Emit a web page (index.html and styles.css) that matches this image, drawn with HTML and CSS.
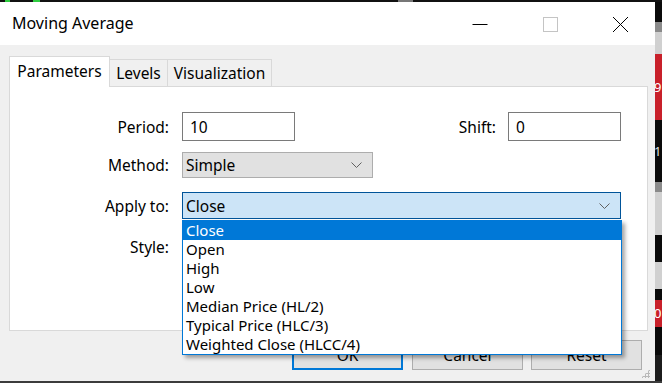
FILE: index.html
```html
<!DOCTYPE html>
<html lang="en">
<head>
    <meta charset="UTF-8">
    <title>Moving Average</title>
    <link rel="stylesheet" href="styles.css">
</head>
<body>
    <div class="screen">
        <div class="top-strip"></div>
        <div class="middle">
            <div class="window">
                <div class="titlebar">
                    <span class="title">Moving Average</span>
                    <div class="controls">
                        <div class="ctl">
                            <svg width="16" height="16" viewBox="0 0 16 16"><path d="M0.5 8.5h15" stroke="#000" stroke-width="1"/></svg>
                        </div>
                        <div class="ctl">
                            <svg width="16" height="16" viewBox="0 0 16 16"><rect x="1.5" y="1.5" width="14" height="14" fill="none" stroke="#c4c4c4" stroke-width="1"/></svg>
                        </div>
                        <div class="ctl">
                            <svg width="16" height="16" viewBox="0 0 16 16"><path d="M1 1L16 16M16 1L1 16" stroke="#000" stroke-width="1"/></svg>
                        </div>
                    </div>
                </div>

                <div class="content">
                    <div class="tabs">
                        <div class="tab active tab-params">Parameters</div>
                        <div class="tab tab-levels">Levels</div>
                        <div class="tab tab-vis">Visualization</div>
                    </div>

                    <div class="panel">
                        <div class="form">
                            <label class="lbl">Period:</label>
                            <div class="row-pair">
                                <div class="edit short">10</div>
                                <label class="lbl shift-lbl">Shift:</label>
                                <div class="edit short">0</div>
                            </div>

                            <label class="lbl">Method:</label>
                            <div class="combo method">
                                <span>Simple</span>
                                <svg class="chev" width="11" height="6" viewBox="0 0 11 6"><path d="M0.5 0.5L5.5 5.5L10.5 0.5" fill="none" stroke="#606060" stroke-width="1"/></svg>
                            </div>

                            <label class="lbl apply-lbl">Apply to:</label>
                            <div class="combo apply">
                                <span>Close</span>
                                <svg class="chev" width="11" height="6" viewBox="0 0 11 6"><path d="M0.5 0.5L5.5 5.5L10.5 0.5" fill="none" stroke="#606060" stroke-width="1"/></svg>
                            </div>

                            <label class="lbl style-lbl">Style:</label>
                            <div></div>
                        </div>
                    </div>

                    <div class="buttons">
                        <button class="btn default">OK</button>
                        <button class="btn">Cancel</button>
                        <button class="btn">Reset</button>
                    </div>

                    <ul class="droplist">
                        <li class="selected">Close</li>
                        <li>Open</li>
                        <li>High</li>
                        <li>Low</li>
                        <li>Median Price (HL/2)</li>
                        <li>Typical Price (HLC/3)</li>
                        <li>Weighted Close (HLCC/4)</li>
                    </ul>

                    <div class="grip"></div>
                </div>
            </div>

            <div class="chart-edge">
                <div class="seg s-black" style="height:20px"></div>
                <div class="seg s-grey" style="height:10px"></div>
                <div class="seg s-light" style="height:22px"></div>
                <div class="seg s-red" style="height:66px"><span>9</span></div>
                <div class="seg s-black" style="height:62px"><span class="num">1</span></div>
                <div class="seg s-grey" style="height:10px"></div>
                <div class="seg s-light" style="height:43px"></div>
                <div class="seg s-black" style="height:27px"></div>
                <div class="seg s-light" style="height:27px"></div>
                <div class="seg s-black" style="height:11px"></div>
                <div class="seg s-red" style="height:27px"><span>0</span></div>
                <div class="seg s-black" style="height:28px"></div>
                <div class="seg s-dark" style="height:28px"></div>
            </div>
        </div>
        <div class="bottom-strip"></div>
    </div>
</body>
</html>
```

FILE: styles.css
```css
html, body {
    margin: 0;
    padding: 0;
    background-color: #000;
}
body {
    font-family: "Noto Sans", "Open Sans", sans-serif;
    font-size: 15.5px;
    color: #000;
}
.screen {
    width: 662px;
    height: 383px;
    display: flex;
    flex-direction: column;
    overflow: hidden;
}
.top-strip {
    height: 2px;
    background: linear-gradient(to right, #111 0, #111 5px, #2ecc40 5px, #2ecc40 10px, #111 10px, #111 33px, #2ecc40 33px, #2ecc40 40px, #111 40px, #111 398px, #777 398px, #777 413px, #111 413px);
}
.middle {
    display: flex;
    height: 379px;
}
.bottom-strip {
    height: 2px;
    background-color: #3c3c3c;
}

/* dialog window */
.window {
    width: 655px;
    height: 379px;
    display: flex;
    flex-direction: column;
    background-color: #f0f0f0;
}
.titlebar {
    height: 43px;
    background-color: #fff;
    display: flex;
    align-items: center;
    justify-content: space-between;
}
.title {
    padding-left: 12px;
    font-size: 16px;
    margin-top: -1px;
}
.controls {
    display: flex;
    height: 100%;
}
.ctl {
    width: 70px;
    display: flex;
    align-items: center;
    justify-content: center;
}
.ctl svg {
    display: block;
}

.content {
    position: relative;
    flex: 1;
    padding: 11px 7px 0 9px;
}

/* tabs */
.tabs {
    display: flex;
    align-items: flex-end;
    margin-bottom: -1px;
    height: 31px;
    position: relative;
    z-index: 1;
}
.tab {
    height: 27px;
    box-sizing: border-box;
    border: 1px solid #d9d9d9;
    border-bottom: none;
    background-color: #f0f0f0;
    margin-bottom: 1px;
    display: flex;
    align-items: center;
    justify-content: center;
    margin-left: -1px;
}
.tab.active {
    height: 31px;
    margin-bottom: 0;
    background-color: #fff;
    margin-left: 0;
    padding-bottom: 3px;
    position: relative;
    z-index: 2;
}
.tab-params { width: 101px; }
.tab-levels { width: 59px; }
.tab-vis { width: 105px; }

.panel {
    height: 245px;
    box-sizing: border-box;
    border: 1px solid #d9d9d9;
    background-color: #fff;
}

/* form */
.form {
    display: grid;
    grid-template-columns: 159px 439px;
    column-gap: 13px;
    grid-template-rows: 29px 26px 27px 20px;
    row-gap: 11px;
    padding-top: 25px;
    align-items: center;
}
.form .combo.apply,
.form .apply-lbl {
    margin-top: 6px;
}
.lbl {
    text-align: right;
}
.style-lbl {
    margin-top: 20px;
}
.row-pair {
    display: flex;
    align-items: center;
    height: 29px;
}
.shift-lbl {
    margin-left: auto;
    margin-right: 12px;
}
.edit {
    height: 29px;
    box-sizing: border-box;
    border: 1px solid #7a7a7a;
    background-color: #fff;
    padding-left: 7px;
    display: flex;
    align-items: center;
}
.edit.short {
    width: 113px;
}
.combo {
    box-sizing: border-box;
    display: flex;
    align-items: center;
    justify-content: space-between;
    padding: 0 10px 0 3px;
}
.combo.method {
    width: 191px;
    height: 26px;
    border: 1px solid #adadad;
    background-color: #e1e1e1;
}
.combo.apply {
    width: 439px;
    height: 27px;
    border: 1px solid #005499;
    background-color: #cce4f7;
}
.chev {
    display: block;
}

/* buttons */
.buttons {
    display: flex;
    justify-content: flex-end;
    gap: 8px;
    margin-top: 9px;
    padding-right: 6px;
}
.btn {
    font-family: inherit;
    font-size: 15.5px;
    height: 30px;
    width: 111px;
    box-sizing: border-box;
    border: 1px solid #adadad;
    background-color: #e1e1e1;
    color: #000;
    padding: 0;
}
.btn.default {
    width: 111px;
    border: 2px solid #0078d7;
    margin-right: 1px;
}

/* open dropdown */
.droplist {
    position: absolute;
    left: 182px;
    top: 175px;
    width: 440px;
    margin: 0;
    padding: 0;
    list-style: none;
    box-sizing: border-box;
    border: 1px solid #0078d7;
    background-color: #fff;
    box-shadow: 3px 3px 4px rgba(0, 0, 0, 0.35);
    z-index: 5;
    font-size: 15px;
}
.droplist li {
    height: 19px;
    line-height: 19px;
    padding-left: 3px;
}
.droplist li.selected {
    background-color: #0078d7;
    color: #fff;
}

.grip {
    position: absolute;
    right: 5px;
    bottom: 3px;
    width: 9px;
    height: 9px;
    background:
        radial-gradient(circle, #b8b8b8 1px, transparent 1.2px) 0 0 / 3px 3px;
    clip-path: polygon(100% 0, 100% 100%, 0 100%);
}

/* chart pieces showing to the right of the dialog */
.chart-edge {
    flex: 1;
    display: flex;
    flex-direction: column;
    overflow: hidden;
}
.seg {
    flex: none;
    font-size: 13px;
    line-height: 1;
    display: flex;
    align-items: center;
    overflow: hidden;
}
.s-black { background-color: #0a0a0a; color: #ddd; }
.s-grey { background-color: #8a8a8a; }
.s-light { background-color: #d0d0d0; }
.s-dark { background-color: #1c1c1c; }
.s-red { background-color: #c8202a; color: #fff; }
.seg span { margin-left: -1px; }
```
